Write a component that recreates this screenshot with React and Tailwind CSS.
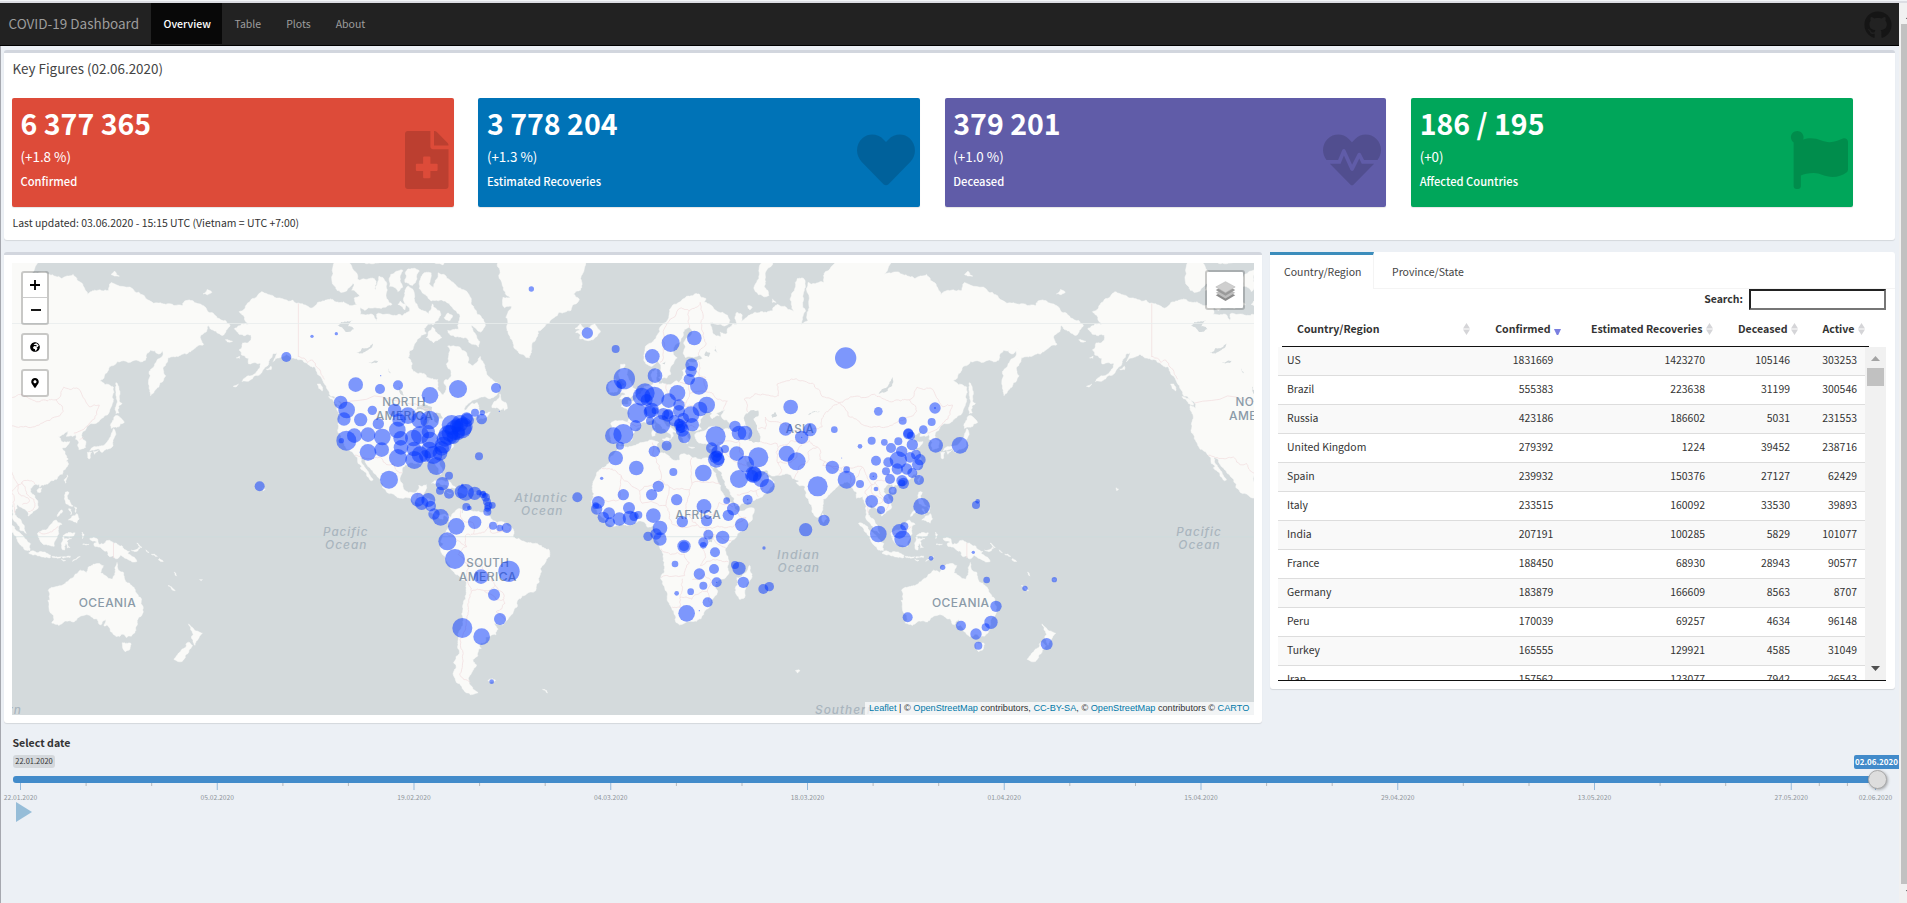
import { FaFileMedical, FaHeart, FaHeartbeat, FaFlag, FaGithub, FaGlobeAfrica, FaMapMarkerAlt } from "react-icons/fa";

/* ---------- Web Mercator helpers ---------- */

const WORLD = 853.33;
const MERIDIAN = 632.6;
const EQUATOR = 536.7;

function project(lon, lat) {
  const r = (lat * Math.PI) / 180;
  const y = Math.log(Math.tan(Math.PI / 4 + r / 2));
  return [MERIDIAN + (lon / 360) * WORLD, EQUATOR - (y * WORLD) / (2 * Math.PI)];
}

function noise(a, b) {
  const s = Math.sin(a * 12.9898 + b * 78.233) * 43758.5453;
  return s - Math.floor(s) - 0.5;
}

function roughen(p, q, depth, out) {
  const dx = q[0] - p[0];
  const dy = q[1] - p[1];
  const len = Math.hypot(dx, dy);
  if (depth === 0 || len < 1.6) {
    out.push(q);
    return;
  }
  const k = noise(p[0] + q[0], p[1] + q[1]) * (len > 14 ? 0.22 : 0.36);
  const mid = [(p[0] + q[0]) / 2 - dy * k, (p[1] + q[1]) / 2 + dx * k];
  roughen(p, mid, depth - 1, out);
  roughen(mid, q, depth - 1, out);
}

function toPath(text, closed) {
  const pts = text
    .trim()
    .split(/\s+/)
    .map((s) => s.split(",").map(Number))
    .map(([lon, lat]) => project(lon, lat));
  const ring = closed ? [...pts, pts[0]] : pts;
  const out = [ring[0]];
  for (let i = 1; i < ring.length; i++) roughen(ring[i - 1], ring[i], 3, out);
  return "M" + out.map((p) => p[0].toFixed(1) + " " + p[1].toFixed(1)).join("L") + (closed ? "Z" : "");
}

const LAND = [
  // North America
  "-168,65.6 -166,64.6 -161,64.5 -161,63.5 -164.5,63 -166,61.6 -165,60.6 -162,59.9 -162,58.7 -158.5,58.8 -157,58.8 -158,57.5 -161,56 -164.8,54.6 -163,54.7 -160,55.7 -156,57.3 -154,58.3 -153.5,59.2 -151.8,60.8 -150,61.2 -151.8,59.2 -149,60 -146,60.8 -144,60 -139.7,59.6 -137.5,58.9 -136,58.2 -134,58 -133,56.5 -131,55.3 -130,54 -128,52 -127.5,51 -124.5,49.7 -122.8,49 -122.4,47.5 -124.7,48.3 -124,46 -124.2,43 -124.3,40.3 -122.5,37.7 -121.8,36.6 -120.6,34.6 -118.4,33.8 -117.1,32.5 -116,30.5 -115.8,29.5 -114.2,28.2 -115,27.8 -113.5,26.7 -112.2,25.5 -112,24.6 -110.2,23 -109.5,23.2 -110.5,24.5 -111.3,26 -112.8,27.8 -114.5,30 -114.8,31.6 -113.2,31.3 -112,29 -110.5,27.5 -109.3,26 -108,25 -106.3,23.3 -105.3,21.5 -105.5,20.3 -104,19 -102,18 -99.7,16.7 -97,15.9 -94.6,16.2 -92.5,14.5 -90,13.8 -87.7,13 -86,11.3 -85.7,10 -83.8,9.3 -83,8.2 -81,7.5 -80,7.3 -79.5,8.9 -78,8 -77.4,7 -77.3,8.5 -79.5,9.5 -82,9 -83.6,10.8 -83.5,14.8 -86,15.9 -88.5,15.8 -88,18 -87,21.4 -90.3,21.1 -91,18.7 -94.5,18.2 -96.5,19.5 -97.8,22.5 -97.2,26 -97,28 -94.5,29.5 -91.5,29.4 -89.2,29.2 -89.5,30.3 -86,30.4 -84,30 -82.7,28.5 -81.8,26 -81,25.2 -80.1,26.5 -81.3,30 -81,32 -79,33.3 -77.5,34.4 -75.7,35.3 -76.3,37 -75,38.5 -74.2,40 -72,41.2 -70.2,41.7 -70.8,43 -68,44.4 -66,45 -64.5,45.5 -66,43.7 -64,44.6 -61,45.5 -60,46.5 -61.5,46 -64,46.3 -64.8,47.8 -65.5,49.1 -68,48.8 -71,47 -68,49.5 -65,50.3 -60,50.2 -57,51.5 -55.7,52.5 -56.5,54 -59,55 -61.7,57 -62.5,58.5 -64.3,60.3 -65.7,59 -67.5,58.3 -69.5,59 -70,61 -73,62.2 -78,62.4 -77.7,60 -78.5,58.5 -76.6,57 -76.5,56 -79.5,54.7 -79,52 -80,51.2 -82.3,52.9 -82.2,55.1 -85,55.3 -88,56.5 -92.5,57 -93,58.7 -94.8,60 -94,61.5 -92,62.8 -90.5,63.8 -87,64.8 -88,65.7 -86,66.4 -84,66.3 -82,67 -81.3,68.5 -84.5,69.6 -86,68 -88,68.5 -90.5,69 -92,70 -92.5,71.5 -95,72 -96.5,70.5 -95.5,69.5 -94,68.5 -97,67.8 -101,67.8 -108,68 -108,66.8 -110,68 -115,68 -115,69.3 -120,69.5 -124,69.8 -127.5,70.3 -130,70 -135,69 -140,69.6 -147,70.2 -152,70.8 -156.5,71.3 -161,70.2 -163,69.4 -166,68.4 -163.5,67 -161.8,66.3 -165,66.4",
  "-117,69.8 -113,68.6 -106,68.9 -101.5,69.5 -104,71 -105,73 -107,73.3 -108.5,71.5 -109,73 -112,72.9 -118,73 -118.5,71.5 -115,70.7 -117.5,70.4",
  "-125.5,72 -123,71.2 -119,72 -116,73.4 -120,75 -125,75",
  "-102.5,72 -100,71.8 -99,71.3 -97,71.9 -98,73 -97,74 -102,73.5",
  "-96,72.5 -93,72.1 -90,73.9 -93,74.2 -95.5,73.9",
  "-90,71.7 -89.5,73 -88,73.7 -85,73.7 -86,72.3 -84,71.8 -82,73.7 -77,72.8 -72,71.6 -68,70.3 -67,69 -63,67.2 -62,66.2 -64,65 -66,65.6 -68,66.2 -67,65 -64.5,63.3 -65,62.2 -68,62.8 -72,64 -77,64.5 -78,65.3 -73.5,65.5 -73,68 -76,69 -79,70 -85,70 -88,71",
  "-87,64 -84,63 -80.5,64 -82,64.6 -84.5,65.9",
  "-79.5,67.5 -77,67 -76,67.8 -78,68.2",
  "-99,69.5 -96,68.7 -95.5,69.5 -98,70",
  "-96,77 -96,75.3 -92,74.9 -80,74.6 -80,77",
  "-113,77 -113,74.8 -106,75 -105,77",
  "-59.3,47.7 -58,49.5 -56,51.5 -55.5,50 -53.5,49.2 -52.8,47.5 -54,46.9 -54.5,47.7 -55.8,47",
  "-128.3,50.7 -125,50 -123.4,48.4 -125.5,48.9",
  "-133,54 -131.7,54 -131,52.2",
  "-154.5,57.5 -152.5,58.2 -152.5,57.4",
  "-84.8,22 -82,23.1 -79,22.5 -75,20.7 -74.3,20.1 -77.5,19.9 -78.5,21.3 -82,22.3",
  "-74.3,18.4 -73,19.9 -70,19.7 -68.5,18.5 -71.5,17.8",
  "-78.3,18.4 -76.3,18.1 -77.5,17.8",
  "-67.2,18.4 -65.7,18.3 -67,18",
  "-156,20.2 -155,19.6 -155.7,19",
  "-168.5,53.4 -166.3,54 -167,53.4",
  "-171.8,63.6 -168.8,63.3 -171,63.2",
  "-167.2,60 -165.7,60.3 -165.8,59.9",
  // Greenland and Iceland
  "-60,78 -58.5,75.5 -56,74 -54.5,71.5 -51.5,70.5 -54.7,70.5 -54,69 -51,69.2 -53.5,67.5 -53,65.5 -51.5,63.8 -49.5,61.8 -48,61 -45,60.1 -43.5,60 -42.7,61.5 -41,63.5 -40,65.2 -37.5,65.8 -33,67.5 -31,68.3 -26,68.6 -22.5,70.2 -25,71 -22,71.5 -22,73 -20.5,74 -19,75.5 -18,78",
  "-24.3,65.6 -22,66.4 -20.3,65.6 -16,66.5 -13.6,65 -15,64.2 -18.8,63.4 -22.5,63.9 -22,64.5 -24,64.9 -21.8,65.4",
  // South America
  "-77.4,7 -77.3,4 -79,1.5 -80,.5 -80.9,-2.3 -79.8,-3 -81.2,-4.6 -81,-6 -79,-8.5 -77,-12 -76.2,-14 -73,-16.5 -70.4,-18.4 -70.2,-22 -70.5,-25.5 -71.5,-29 -71.5,-32.5 -73.3,-37 -73.5,-39.5 -73.8,-41.8 -73,-44 -74.5,-45 -75.5,-46.7 -74.5,-48.5 -75.5,-50.5 -73.5,-52.5 -71.5,-54 -68.5,-55.3 -65.2,-54.8 -68.3,-53 -69.2,-51 -67.7,-49.5 -65.8,-47.5 -67.5,-46 -65.5,-45 -65.2,-43 -63.8,-42.5 -65,-41 -62.2,-40.5 -62,-39 -57.7,-38.2 -56.8,-36.3 -58.3,-34.2 -57.5,-34.5 -54.9,-34.9 -53.4,-33.5 -50.5,-30.8 -48.7,-28.3 -48.6,-26 -46.5,-24.2 -44,-23 -41.9,-22.8 -40.8,-21.8 -39.5,-19 -39,-16 -38.9,-13.2 -37,-11.2 -35,-8.5 -34.9,-6.8 -35.5,-5.2 -38.5,-3.7 -41.5,-2.9 -44.5,-2.6 -48,-.7 -50.5,-.2 -50,1.5 -51.5,4.3 -54,5.8 -57.2,6 -60,8.4 -62,10.5 -66,10.5 -68.3,10.9 -70,12.1 -71.5,11 -71.7,9.2 -72,11.5 -74.5,11.1 -75.6,10 -76.8,8.3",
  "-61,-51.8 -59,-51.3 -57.8,-51.7 -60,-52.2",
  "-38,-54 -36.3,-54.3 -35.9,-54.9",
  // Africa
  "-5.9,35.8 -2,35.2 3,36.8 9.8,37.3 11,37 10.2,34.5 11.5,33.2 15.2,32.3 18,30.6 20,30.9 20,32.6 23,32.6 25.2,31.6 29,30.9 31,31.6 34.2,31.3 34.7,29.5 34.2,27.8 32.6,29.9 33.8,27 35.5,24 37.2,21 37.5,18.8 39.5,15.5 43,12.6 43.3,11.5 44.5,10.4 51.2,11.9 50.8,9.5 48,4.5 45,1.8 41.6,-1.7 39.2,-4.7 39.4,-7 40.6,-10.7 40.7,-15 37,-17.8 34.8,-20 35.5,-23.8 32.8,-25.8 32.6,-28.3 30,-31.2 27,-33.6 22,-34.2 19.8,-34.8 18.3,-34 18.2,-31.8 16.4,-28.6 15,-26.5 14.4,-22.5 11.8,-17.5 13.5,-12.5 13,-9 12.2,-5.8 9,-1 9.6,2.3 9.4,4 8.5,4.7 6,4.3 4.2,6.4 1,6 -2,4.8 -4,5.2 -7.7,4.4 -11.5,6.8 -13.3,8.7 -15,11 -16.8,12.4 -17.5,14.7 -16.3,18 -17,21 -15.8,24 -13,27.8 -10,29.5 -9.7,31.5 -6.8,34",
  "49.3,-12 50.4,-15.5 49.5,-18 47.2,-24.9 45,-25.5 43.3,-22.5 44.4,-20 44,-17 46.5,-15.7",
  // Eurasia
  "-9,37 -9.4,38.8 -8.8,41.5 -9.2,43.1 -8,43.7 -2,43.4 -1.4,44.5 -1.2,46 -2.5,47.4 -4.7,48 -4.5,48.6 -1.6,48.7 -1.8,49.7 0,49.4 1.6,50.8 3.5,51.5 4.5,52.5 5,53.4 7,53.6 8.7,53.9 8.2,55.5 8.2,57 10.6,57.7 10.3,56.2 10,54.8 11,54.1 14,54 18.5,54.8 19.8,54.4 21,55.5 21,57.2 22.5,57.7 24.3,57.1 24.3,58.3 23.4,59.2 28,59.6 30,59.9 28,60.6 25,60.2 22.5,60 21.3,61 21.5,63 25.2,65 24,65.8 22,65.5 21.3,64.3 17.8,62.5 17.2,61 18.8,60 16.8,58.5 16,56.3 14.2,55.4 12.8,55.5 11.3,58.8 10.5,59.3 8,58.1 5.5,58.8 5,61 6,62.6 9.5,63.7 11.5,65 13,66.5 15.5,68.2 19,69.7 23.5,70.7 28,71 31,70.3 30,69.8 33,69.4 38,68.3 41,67 40.5,66.4 36,66.3 33,66.7 34.8,64.5 37.5,63.9 37,65 39.8,64.7 40,65.6 42.2,66.4 44,66.3 44,68.3 46,68 46,66.8 50,68 54,68.4 59,68.5 61,69.5 65,69 68.5,68.3 67,69.7 67,71 69.5,73 72.7,72.8 72,71 73,68.5 71,66.3 74,67 74.5,69 74,72.5 77,72.3 80.5,72.5 80.8,73.6 87,75 95,77 113,77 106,73.5 112,73.8 114,73.5 119,73 124,73.5 128,72.3 130,70.9 133,71.5 139,71.5 140,72.5 150,71.3 153,70.9 160,69.7 163,69.5 170,69.3 171,70 176,69.7 180,69 184,67.8 188,67 190.2,66.1 187,64.4 184,65.2 181,66.2 180,65 178,64.5 179,62.7 175,61.8 172,60.8 168,60.3 164,60 162,58 163,56 162,54.8 160,53.2 158,51.8 156.7,51 156,53 156,57 158,58 161.5,60.3 163.8,62.5 160,60.8 156.5,61.6 154.5,59.5 150,59.5 142.5,59.2 138.5,57 135.3,54.8 137.5,53.8 141,53.2 140.5,50.5 140.4,48.5 137,45.2 134,43.2 131.5,43 130,42.2 127.7,40 127.5,39.2 129.4,37 129.2,35.2 126.4,34.5 126.4,37 125,38 125,39.6 122,39 121.2,38.9 122,40.6 119,39.2 117.7,38.8 119,37.3 122.5,37.2 119.3,35 121,32.5 121.9,31 121,30.5 122,29.5 121,28 119.5,25.5 117,23.5 114,22.3 110.5,21.2 109.9,20.4 109.7,21.5 108,21.6 106,20 106,18.5 109,15 109.3,12.5 107,10.5 105,8.7 104.9,10.2 102.5,12 101,12.8 100.4,13.5 99.3,10.5 100.3,8.2 102.2,6.2 103.4,4 104.2,1.4 101.5,2.8 100.3,5.5 98.3,8 98.6,11 97.7,15 97.2,16.8 94.5,16 94.3,18.5 92,21.5 90.5,22.6 88.5,21.7 87,21.3 85.5,19.8 82.3,16.8 80.2,15.5 80.2,13 79.8,10.3 78,8.1 76.3,9.8 74.5,14 73,17 72.7,20.8 70.5,20.9 69,22.3 70.3,22.9 67.5,23.8 66.5,25.3 61.5,25.1 57.3,25.6 56.7,27.1 54,26.6 51.5,27.8 50,30.1 48,30 48,29 50.2,26.7 50.2,25.6 51,24.6 51.5,25.9 51.5,24.3 54,24.2 56.2,26.2 56.6,24.5 59.8,22.5 58,20.3 57,18.8 55,17 52,15.6 48,14 45,12.8 43.5,12.7 42.8,16 40.8,19.5 39,21.5 38,24 35.5,27.8 35,29.5 34.2,31.3 35,33 36,35 36.1,36.8 33.5,36.1 30.6,36.6 28,36.7 26.5,38.3 26.2,39.5 29,40.5 31,41.1 35,42 38,41 41.5,41.4 41,43 38,44.5 37.3,45.3 39.3,47.2 35,46.2 36.5,45.3 33.5,44.5 32.7,45.5 33.5,46.1 31,46.7 29.7,45.2 28.6,43.8 27.7,42.4 29,41.2 26.2,40.7 24,40.8 23.7,39.9 22.7,40.5 23,39 24,37.8 23,36.5 21.7,36.9 21.2,38.3 19.4,40.5 19.5,41.8 16.5,43.4 15,44.6 13.6,45 13.6,45.7 12.3,45.3 12.4,44.2 14,42.5 16.1,41.8 18.4,40.2 16.9,40.4 17.1,39 16,37.9 15.7,39.9 12.5,41.5 10.3,43.3 9,44.4 7.5,43.8 3.5,43.3 3.2,41.9 .8,40.8 -.3,39.5 0,38.7 -2,36.8 -4.5,36.6 -5.6,36 -6.5,37",
  "-5.5,50.1 -3,50.7 1.3,51.2 1.6,52.7 0,53 -1.5,55 -2,57.5 -4,57.7 -3.2,58.6 -5,58.6 -6,56.5 -4.8,54.8 -3,54 -4.5,53.3 -5,51.8 -3,51.4",
  "-10,51.8 -6.3,52.2 -6,54 -7.3,55.3 -10,54.2",
  "11,55.6 12.6,56 12,54.8",
  "12.5,38 15.6,38.2 15,36.7",
  "8.3,39 8.4,40.8 9.7,41 9.5,39.2",
  "8.6,42.5 9.4,43 9.4,41.6",
  "23.6,35.4 26.2,35.2 25,34.9",
  "32.3,35 34.5,35.6 33.5,34.7",
  "51.5,71.5 53,70.9 55.5,70.6 57.5,70.8 55.5,72 56,73.3 60,75.5 66,78 58,78 55,75 53.5,73.5",
  "48.5,69.3 50.5,69.1 49.5,68.7",
  "59,70.3 60.5,69.8 59,69.8",
  "178.8,71 182.5,71.2 180.5,71.6",
  "139,75.6 143,75 150,75 147,75.5",
  "140,73.5 143.5,73.3 141.5,73.9",
  "142,54.3 143.3,52.5 143.3,49.5 144.6,49 142.8,47.2 143.3,46.2 142,46 142,48 142,51.5",
  "140,41.5 140.3,43.3 141.8,45.4 145.5,43.3 143.2,42",
  "141,41.4 142,39.6 141,38 140.8,35.7 138.8,34.7 136,33.5 135,34.6 131,34 132.5,35.4 136,35.8 138.5,37.3 140,39.5",
  "130,33.5 131.8,33.5 131,31.2 130.2,31.5",
  "132.5,33.8 134.6,34.2 133,32.8",
  "120.2,23.3 121.5,25.2 121.8,24.5 120.8,22",
  "108.7,19.3 110.6,20.1 110.3,18.5 109,18.4",
  "120.3,16 120.8,18.5 122.2,18.4 121.6,15.8 124,12.8 121,13.7",
  "122,7 123.5,8.6 125.5,9.7 126.5,7.5 125.5,5.7 124,6.5",
  "122,11.7 123,11.5 123,9.2",
  "124.5,12.5 125.6,12 125,10.2",
  "117.3,8.5 119.4,11.2 119.5,10.5",
  "109,1.5 109.6,2 111.5,2.8 113,3.2 116.8,7 119.2,5.2 117.8,4 117.8,1 116.5,-1.5 116,-4 114.5,-3.8 111.7,-3.4 110,-1.5",
  "95.3,5.6 97.5,5.2 100.5,2.3 103.8,-1 106,-3 105.8,-5.8 104.5,-5.8 102.3,-4 100.3,-1 98.7,1.7",
  "105.2,-6.8 106.5,-6 108.5,-6.7 111,-6.4 112.7,-7 114.5,-7.8 114.4,-8.7 110,-8.1 106.5,-7.4",
  "115,-8.3 117,-8.4 119,-8.4 118.5,-8.9 115.5,-8.8",
  "119,-3 119.8,.5 121,1.3 124.8,1.6 124.3,.4 120.3,.5 120.2,-1 123.3,-.8 121.3,-2 122.7,-4.5 121.5,-4.7 120.9,-2.8 120.4,-5.6 119.5,-5.5",
  "119.5,-8.4 122.8,-8.2 122.7,-8.8 119.5,-8.9",
  "123.6,-10.3 127,-8.4 125,-9.6",
  "119,-9.5 120.8,-10 120,-10.3",
  "127.7,2 128.6,1 127.9,-.8",
  "128,-3.2 130.7,-3.2 129.5,-3.5",
  "131,-.8 132.5,-.4 134,-.8 135,-3.3 138,-1.7 141,-2.6 144.5,-3.8 145.8,-5.5 147.8,-6.2 147,-6.9 150.8,-10.4 147.5,-9.8 144,-7.7 142.5,-9.3 139,-8.1 138,-6 135,-4.4 133,-4 132.8,-2.8 134,-2.4 131.4,-1.5",
  "148.5,-5.7 150.5,-5.5 151.8,-4.3 152.2,-4.9 150,-6.3",
  "150.8,-2.7 153,-4.5 152.5,-4.2",
  "154.7,-5.5 156,-6.7 155.3,-6.5",
  "157,-7.4 159.5,-8.3 158.8,-8.3",
  "160.5,-9.2 162,-10.4 160,-9.8",
  "164,-20.2 167,-22.2 166,-22",
  "166.6,-14.8 167.6,-16.4 167,-16",
  "177.3,-17.8 178.5,-17.8 178,-18.2",
  "79.8,8 80.2,9.7 81.8,7.5 80.5,6",
  // Australia and New Zealand
  "113.5,-22 114,-26 113.3,-26 115.7,-31.5 115,-34.2 118,-35 120,-33.9 124,-33.8 126,-32.3 131,-31.5 134,-32.8 135.7,-34.9 137.8,-32.8 137,-35.2 138.3,-34.8 139.7,-37 141,-38.1 143.5,-38.8 145,-38 146.4,-39.1 150,-37.5 151,-34 152.9,-31.5 153.5,-28.5 152.8,-25.3 150.8,-23.3 149,-20.5 146.2,-18.8 145.3,-15 143.5,-14.2 142.5,-10.8 141.6,-13 141.6,-16 140.5,-17.7 139,-17.4 135.5,-15 136.8,-12.2 132.5,-11.5 130.8,-12.5 129.5,-15 127,-14 125,-15.5 124,-17 122.2,-18 120,-19.8 116.8,-20.6",
  "144.7,-40.8 148.2,-40.9 147.8,-43 146,-43.6",
  "172.7,-34.5 175,-36.5 178.5,-37.7 177,-39.3 175.3,-41.6 173.9,-39.3 174.7,-38",
  "172.7,-40.6 174.3,-41.7 172.8,-43.7 170.7,-45.9 168.8,-46.6 166.5,-45.9 168.5,-44 171.3,-42.4",
  "68.7,-49.1 70.5,-49 69.5,-49.7",
];

const WATER = [
  "-92,46.8 -88,49 -84.6,47.9 -84.7,46.6 -88,46.9",
  "-87.8,42 -87,45.5 -85,45.8 -86.4,43",
  "-84.5,46 -81,46 -80,44.6 -81.7,44.5 -82.4,43.2 -83.7,44",
  "-124.5,66.2 -121,66.8 -118,67 -120,66 -117.5,65.5 -121,65 -122.5,65.8",
  "-116.5,61 -114,62 -109.5,62.9 -112,61.5 -114,60.9",
  "-111.5,59 -107,59.4 -110,58.8",
  "-103,57.8 -102,56.5 -102.8,56.8",
  "-98.7,53.5 -97,52 -96.5,50.5 -98,51.5",
  "47,45 49,46.5 53,46.9 53,45.2 51,44.5 52.5,42.5 53,40.5 53.9,39 54,37 51,36.8 49,37.6 49,39.5 49.5,40.5 48,42 47.5,43.5",
  "58.5,45.5 60,46.5 61,45.5 59,44.7",
  "103.8,51.5 106,51.8 108.5,53.2 109.8,55.7 107.3,53.2",
  "74,45.5 76,46.6 79,46.6 75.5,46.2",
  "30.3,60.6 31,61.4 32.8,61 32,60.2",
  "34.5,61.5 35.2,62.4 36,61",
  "12.5,58.8 13.8,59.3 13.6,58.6",
  "31.8,0 34,.3 33.5,-2.3 32,-2",
];

const BORDERS = [
  "-123,49 -95,49 -89,48 -84.5,46.5 -82.5,45",
  "-141,60.3 -137,59 -135,59.5 -131.5,56.5 -130,55.2",
  "-117.1,32.5 -111,31.3 -106.5,31.8 -103,29 -101,29.5 -99,26.5 -97.2,26",
  "-92.2,14.5 -91,17.8 -89,17.8 -88.5,16",
  "-79,1.5 -75.5,0 -70,-4.2 -70,1 -67,1.2 -67.5,6 -72,7.5 -72.5,11",
  "-70,-4.2 -73.5,-7.5 -70.5,-11 -68.8,-12.5 -69.5,-17.5 -68,-22.5 -66.5,-22 -62.5,-22.2 -58,-20 -60,-16 -65,-11.5 -70.5,-11",
  "-68,-22.5 -69.5,-28 -70,-33 -71.5,-38 -71.8,-45 -73,-50 -68.5,-52.3",
  "-62.5,-22.2 -57.7,-25.5 -54.5,-25.6 -54.2,-24 -58,-20",
  "-54.5,-25.6 -53.8,-27 -57.6,-30.2 -53.5,-33.5",
  "-67,1.2 -64,1.5 -60,5 -60,2 -52,2.5 -51.5,4.2",
  "-57.2,6 -57,2 -54.5,2.4 -54,5.7",
  "-8.7,27.7 -8.7,27.3 -13,27.7",
  "-8.7,27.3 -4.8,25 3,19 12,23.5 10,30 8.5,33 8.3,36.9",
  "-4.8,25 -5.5,15.5 -12,15 -16.3,16.5",
  "3,19 4,14 14,13 15.5,20.5 24,19.5 25,22 25,31.6",
  "12,23.5 15.5,20.5",
  "25,22 36.8,22",
  "24,19.5 22.5,13 24,8.7 27.4,5 31,3.7 36,4.5 42,4 47.9,8 43,11",
  "24,8.7 34,9 36.5,14.3 42.4,12.5",
  "14,13 15.5,7.5 18.5,4.5 27.4,5",
  "12,-5 16,-7.5 21.8,-7.3 24,-11 22,-16.2 12,-17",
  "31,3.7 29.5,-4 30.8,-8.3 28.5,-12 34,-9.5 40.5,-10.6",
  "41.6,-1.7 34,1 34,-1 39.2,-4.6",
  "21,-17.5 21,-22 20,-24.8 20,-28.5 16.5,-28.6",
  "20,-24.8 25,-25.5 29.5,-22.2 31.5,-22.4 32,-26 32.8,-26.8",
  "25.2,-17.8 30.3,-15.6 33,-18 31.5,-22.4",
  "-1.8,43.4 3,42.4",
  "2.5,51 6,49.5 8.2,49 7.5,47.5 10,47 13.7,46.5",
  "14.2,54 15,51 19,49.5 22.5,49 24,51.5 23.5,54 20,54.4",
  "22.5,49 22,48 26,48 28.2,45.5",
  "24,51.5 31,52 34,51.5 36,50 40,49.6 38.2,47.2",
  "11.5,59 12.5,63.5 14.5,66.5 20.5,69 24,68.6 24,65.8",
  "24,68.6 28.5,69.8 29,67 30,64 31,62.8 27.8,60.6",
  "28.2,56 27.5,59.4",
  "31,52 30.8,55.6 28.2,56 24,57.8",
  "26.5,41.8 22.5,42.3 22.5,44.5 28,44",
  "36,36.8 42.3,37.2 44.8,37.2 44.5,39.7 42,41.5",
  "44.8,37.2 46,33 48,30",
  "38.8,33.4 36,32.5 35,29.5",
  "38.8,33.4 42,31 46.5,29 48,28.6",
  "44,17.4 52,19 55,20 55,22.6 51.6,24.1",
  "52,19 53,16.5",
  "48.5,46.5 47,50 51.5,51.5 58,51 61.5,51 61,54 69,55.3 76,54.2 80,50.8 87.3,49.1",
  "53,41.5 56,41.3 56,45 61.5,43.5 66,42 68,40.8 73.5,40 80,42 80.5,45 83,47.2 87.3,49.1",
  "54,37.3 61,36.5 61.5,35.3 66.5,37.4 71.5,36.6 74.8,37.3 73.5,39.5",
  "61.5,35.3 61,31.4 63,27.2 61.6,25.2",
  "61,29.8 66.3,29.9 69.3,31.8 71.5,36",
  "68.2,23.7 70,28 74.5,31 74,33.5 78,35.4 74.8,37",
  "78,35.4 79,31 81.2,30.2 88,27.8 92,27.8 97,28.2 98.7,25 101,21.5 105.5,23 108,21.6",
  "81.2,30.2 80.2,28.8 88,26.5 88,27.8",
  "88,26.5 92,25 92.3,21.2",
  "97,28.2 94,24 92.3,21.2",
  "101,21.5 98,18 99,13 99.5,10",
  "102,22.3 104,19 107.5,15.5 107.5,12 105,10.5",
  "101,21.5 101,17.8 105.6,15 102.5,13.5",
  "87.3,49.1 92,50.7 98,50.5 102,51.4 107,49.8 113,49.6 116.7,49.9 119.8,46.7 112,43.6 105,41.8 97,42.7 91,45.2 87.3,49.1",
  "116.7,49.9 120,53.2 125.5,53 130.8,48 135,48.4 131.5,43.5 130.5,42.6 124.3,40",
  "126.7,37.8 128.3,38.6",
  "109.6,1.9 112,1.2 115,2 117.6,4.2",
];

const LAND_PATH = LAND.map((s) => toPath(s, true)).join("");
const WATER_PATH = WATER.map((s) => toPath(s, true)).join("");
const BORDER_PATH = BORDERS.map((s) => toPath(s, false)).join("");

/* ---------- Case bubbles: x, y, radius on a regional grid (1/3 px) ---------- */

const REGIONS = [
  {
    id: "pacific",
    origin: "translate(0 250) scale(0.33333)",
    points: "936,259,5 1009,251,5 859,321,15 1142,377,2 779,709,15",
  },
  {
    id: "americas",
    origin: "translate(300 350) scale(0.33333)",
    points:
      "694,-183,8 167,104,22 240,117,15 294,106,15 390,136,25 474,117,27 588,114,15 598,184,2 122,157,20 140,180,25 132,207,20 182,209,20 217,181,14 235,221,17 284,181,20 324,197,25 292,240,25 297,210,20 358,210,24 389,210,28 163,257,22 139,272,30 124,272,8 204,254,22 247,261,25 302,265,22 340,264,25 204,307,25 245,299,22 303,292,22 294,324,27 343,330,27 342,297,22 360,314,25 375,318,18 400,315,27 409,348,27 360,255,27 385,245,20 390,270,25 388,300,25 425,295,22 420,310,22 430,285,25 435,265,25 445,255,30 455,225,30 465,240,30 480,220,25 485,235,30 490,230,28 500,205,18 502,210,20 450,250,25 460,262,20 475,250,20 470,225,20 525,188,12 547,188,8 545,207,16 537,319,12 267,389,27 447,377,12 427,401,20 420,422,12 447,431,15 353,449,21 365,460,20 385,450,21 392,468,16 402,492,17 422,502,25 484,425,20 497,427,25 487,405,4 524,430,20 537,428,8 548,434,10 550,430,8 557,442,13 561,455,12 565,467,12 577,466,10 562,485,12 555,437,8 563,475,10 499,471,12 508,474,7 469,529,25 524,517,20 579,527,12 599,534,10 620,534,15 442,574,27 465,627,30 543,680,22 627,664,32 582,734,18 600,807,18 487,834,30 545,860,25 575,995,7",
  },
  {
    id: "europe-africa",
    origin: "translate(560 250) scale(0.33333)",
    points:
      "82,249,17 167,297,12 332,279,27 403,264,22 277,319,22 285,377,22 395,344,19 393,364,17 388,388,17 417,407,27 193,386,32 162,414,24 184,402,15 200,456,15 255,429,29 245,440,27 283,440,30 260,450,18 352,429,24 326,452,22 357,465,17 357,483,18 232,489,30 270,486,19 285,482,10 275,480,22 270,513,12 227,527,17 303,523,28 310,492,18 323,497,18 325,492,15 343,512,17 393,494,25 420,477,22 440,465,25 370,505,17 397,524,20 360,525,18 365,530,18 367,540,20 357,520,14 373,560,19 362,535,14 160,557,25 190,552,30 180,587,12 320,587,15 283,604,17 167,624,22 229,654,22 125,685,5 340,666,12 430,669,25 467,559,30 525,529,17 537,549,22 555,549,22 455,594,17 472,605,18 470,618,17 469,628,25 475,628,18 465,622,17 495,597,12 530,611,22 595,622,30 557,642,25 537,687,27 580,674,25 583,672,22 577,678,18 603,687,24 622,709,22 563,749,15 563,749,2 500,752,10 520,777,19 505,796,17 545,824,20 692,471,22 677,537,20 750,539,20 725,562,20 725,562,2 680,611,24 710,634,27 773,709,30 817,652,20 860,689,27 860,659,10 845,624,1.5 900,589,7 823,539,10 955,484,13 857,324,32 737,839,20 792,811,17 52,742,15 115,757,19 110,777,17 107,767,10 130,802,17 147,790,18 150,817,15 178,807,20 207,774,18 210,804,22 222,799,14 235,795,12 190,734,17 275,734,17 295,709,17 280,797,22 350,749,17 432,769,22 367,815,17 440,812,17 300,834,22 300,867,20 288,852,17 264,859,14 445,854,15 488,862,20 372,889,20 372,889,15 430,877,15 430,886,10 465,907,15 462,957,15 345,942,10 418,972,17 430,1007,12 470,997,15 470,997,2 392,1025,10 350,1030,7 443,1057,15 380,1090,25 418,1082,2 525,945,12 537,955,20 550,997,17 610,1017,15 628,1010,14 612,894,5",
  },
  {
    id: "asia-oceania",
    origin: "translate(840 300) scale(0.33333)",
    points:
      "95,422,12 133,427,10 108,482,15 100,529,12 100,529,2 60,552,12 108,567,7 95,604,19 123,630,12 115,702,25 188,362,12 285,324,17 285,324,3 275,366,12 250,389,13 205,400,15 205,402,16 213,407,12 175,424,12 153,444,15 217,434,17 185,454,17 175,480,26 145,487,15 210,472,16 228,464,15 240,479,17 233,494,17 172,507,17 200,507,17 138,514,12 217,519,15 150,537,15 186,542,17 190,550,17 186,549,10 237,540,15 158,572,12 145,597,15 287,436,22 360,436,25 245,619,25 408,615,12 413,604,7 193,679,12 178,694,22 188,717,25 400,757,5 273,775,7 308,802,8 440,840,10 555,865,8 643,839,8 468,919,17 453,967,20 437,982,12 408,1002,17 415,1037,12 363,977,15 203,952,15 620,1032,18",
  },
];

const LAND_LABELS = [
  ["NORTH", 382.3, 406, 43.5],
  ["AMERICA", 375.7, 420, 57.5],
  ["SOUTH", 466.3, 567, 43],
  ["AMERICA", 458.7, 581, 58],
  ["AFRICA", 675.3, 519, 45.7],
  ["ASIA", 785.7, 433, 28.5],
  ["OCEANIA", 78.7, 606.7, 57.5],
  ["OCEANIA", 932, 606.7, 57.5],
  ["NORTH", 1235.6, 406, 43.5],
  ["AMERICA", 1229, 420, 57.5],
];

const SEA_LABELS = [
  ["Pacific", 323, 536.3, 45.5],
  ["Ocean", 325, 549, 42.5],
  ["Pacific", 1176.3, 536.3, 45.5],
  ["Ocean", 1178.3, 549, 42.5],
  ["Atlantic", 514.3, 502, 54],
  ["Ocean", 521, 515, 42.5],
  ["Indian", 777, 559, 43],
  ["Ocean", 777.5, 571.7, 42.5],
  ["Southern", 815, 713.6, 60],
  ["Southern", -38, 713.6, 60],
];

function WorldMap() {
  return (
    <svg className="block h-[452px] w-[1242px] bg-[#d4dadc]" viewBox="12 263 1242 452">
      <defs>
        <g id="world">
          <path d={LAND_PATH} fill="#fafaf8" stroke="#fafaf8" strokeWidth="0.5" />
          <path d={WATER_PATH} fill="#d4dadc" />
          <path d={BORDER_PATH} fill="none" stroke="#f2dfe1" strokeWidth="0.8" />
          <path d="M298.4 303.5V357M966.8 543V558" stroke="#f2dfe1" strokeWidth="0.8" />
        </g>
      </defs>
      <use href="#world" x={-WORLD} />
      <use href="#world" />
      <use href="#world" x={WORLD} />
      <path d="M12 323.5H1254" stroke="#e8ecec" strokeWidth="0.8" />
      <path d="M12 536.7H1254" stroke="#cddddf" strokeWidth="0.8" strokeOpacity="0.7" />
      <g fill="#8b9aa8" fontFamily="Inter, 'Liberation Sans', sans-serif" fontSize="11.3" fontWeight="500" letterSpacing="0.4">
        {LAND_LABELS.map(([t, x, y, w], i) => (
          <text key={i} x={x} y={y} textLength={w} lengthAdjust="spacingAndGlyphs">
            {t}
          </text>
        ))}
      </g>
      <g fill="#a9b5be" fontFamily="Inter, 'Liberation Sans', sans-serif" fontSize="11.4" fontWeight="500" fontStyle="italic" letterSpacing="1">
        {SEA_LABELS.map(([t, x, y, w], i) => (
          <text key={i} x={x} y={y} textLength={w} lengthAdjust="spacingAndGlyphs">
            {t}
          </text>
        ))}
      </g>
      {REGIONS.map((r) => (
        <g key={r.id} transform={r.origin} fill="#0033ff" fillOpacity="0.5">
          {r.points.split(" ").map((p, i) => {
            const [cx, cy, rad] = p.split(",");
            return <circle key={i} cx={cx} cy={cy} r={rad} />;
          })}
        </g>
      ))}
    </svg>
  );
}

const ctl =
  "flex items-center justify-center rounded-[3px] border-2 border-black/20 bg-white bg-clip-padding text-black";

function MapPanel() {
  return (
    <section className="h-[471px] w-[1258px] rounded-[3px] border-t-[3px] border-[#d2d6de] bg-white px-2 pt-2 shadow-[0_1px_1px_rgba(0,0,0,0.1)]">
      <div className="relative h-[452px] w-[1242px] overflow-hidden">
        <WorldMap />
        <div className="absolute top-2 left-[9px] flex flex-col gap-[8px]">
          <div className="flex h-[54px] w-7 flex-col rounded-[3px] border-2 border-black/20 bg-white bg-clip-padding text-black">
            <div className="flex h-[25px] items-center justify-center border-b border-[#ccc]">
              <svg viewBox="0 0 10 10" className="size-[10px]">
                <path d="M5 0V10M0 5H10" stroke="currentColor" strokeWidth="1.8" />
              </svg>
            </div>
            <div className="flex flex-1 items-center justify-center pb-[2px] pl-px">
              <svg viewBox="0 0 10 10" className="size-[10px]">
                <path d="M0 5H10" stroke="currentColor" strokeWidth="1.8" />
              </svg>
            </div>
          </div>
          <div className={ctl + " size-7"}>
            <FaGlobeAfrica className="size-[10px]" />
          </div>
          <div className={ctl + " size-7"}>
            <FaMapMarkerAlt className="size-[10px]" />
          </div>
        </div>
        <div className={ctl + " absolute top-[7px] right-[9px] size-10"}>
          <svg viewBox="0 0 26 26" className="size-[23px]">
            <path d="M13 12.5L24 18.5L13 25L2 18.5Z" fill="#8c8c8c" />
            <path d="M13 9.5L24 15.5L13 22L2 15.5Z" fill="#bdbdbd" />
            <path d="M13 6.5L24 12.5L13 19L2 12.5Z" fill="#9a9a9a" />
            <path d="M13 3L24 9L13 15.5L2 9Z" fill="#cfcfcf" stroke="#b4b4b4" strokeWidth="0.6" />
          </svg>
        </div>
        <div className="absolute right-0 bottom-0 h-[13px] w-[389px] bg-white/70 pl-1 font-['Liberation_Sans',Arial,sans-serif] text-[9.17px] leading-[12px] whitespace-nowrap text-[#333] [&_a]:text-[#0078a8]">
          <a>Leaflet</a> | © <a>OpenStreetMap</a> contributors, <a>CC-BY-SA</a>, © <a>OpenStreetMap</a> contributors ©{" "}
          <a>CARTO</a>
        </div>
      </div>
    </section>
  );
}

/* ---------- Key figures ---------- */

const CARDS = [
  { value: "6 377 365", delta: "(+1.8 %)", label: "Confirmed", color: "bg-[#dd4b39]", Icon: FaFileMedical, iconSize: "w-[43.5px]" },
  { value: "3 778 204", delta: "(+1.3 %)", label: "Estimated Recoveries", color: "bg-[#0073b7]", Icon: FaHeart, iconSize: "w-[58px]" },
  { value: "379 201", delta: "(+1.0 %)", label: "Deceased", color: "bg-[#605ca8]", Icon: FaHeartbeat, iconSize: "w-[58px]" },
  { value: "186 / 195", delta: "(+0)", label: "Affected Countries", color: "bg-[#00a65a]", Icon: FaFlag, iconSize: "w-[58px]" },
];

function KeyFigures() {
  return (
    <section className="mr-1 ml-1 h-[190px] rounded-[3px] border-t-[3px] border-[#d2d6de] bg-white px-2 shadow-[0_1px_1px_rgba(0,0,0,0.1)]">
      <h3 className="pt-[5px] pl-[0.5px] text-[13.4px] leading-[20px] text-[#444]">Key Figures (02.06.2020)</h3>
      <div className="mt-[20px] flex gap-[24.7px]">
        {CARDS.map(({ value, delta, label, color, Icon, iconSize }) => (
          <div
            key={label}
            className={"flex h-[109px] w-[441.7px] shrink-0 justify-between rounded-[2px] pr-[5px] pl-[8.5px] text-white shadow-[0_1px_1px_rgba(0,0,0,0.1)] " + color}
          >
            <div className="pt-[9px]">
              <div className="text-[28.5px] leading-[32px] font-bold">{value}</div>
              <div className="mt-[5px] text-[13.4px] leading-[24px]">{delta}</div>
              <div className="mt-[3px] text-[11.2px] leading-[20px] font-medium">{label}</div>
            </div>
            <Icon className={"mt-[33px] h-[58px] text-black/15 " + iconSize} />
          </div>
        ))}
      </div>
      <p className="mt-[6px] pl-[0.5px] text-[10.45px] leading-[20px] text-[#333]">
        Last updated: 03.06.2020 - 15:15 UTC (Vietnam = UTC +7:00)
      </p>
    </section>
  );
}

/* ---------- Table ---------- */

const ROWS = [
  ["US", 1831669, 1423270, 105146, 303253],
  ["Brazil", 555383, 223638, 31199, 300546],
  ["Russia", 423186, 186602, 5031, 231553],
  ["United Kingdom", 279392, 1224, 39452, 238716],
  ["Spain", 239932, 150376, 27127, 62429],
  ["Italy", 233515, 160092, 33530, 39893],
  ["India", 207191, 100285, 5829, 101077],
  ["France", 188450, 68930, 28943, 90577],
  ["Germany", 183879, 166609, 8563, 8707],
  ["Peru", 170039, 69257, 4634, 96148],
  ["Turkey", 165555, 129921, 4585, 31049],
  ["Iran", 157562, 123077, 7942, 26543],
];

function Sort({ active }) {
  return active ? (
    <svg viewBox="0 0 7 12" className="h-3 w-[7px] shrink-0">
      <path d="M0 6H7L4.2 12H2.8Z" fill="#7a7fe0" />
    </svg>
  ) : (
    <svg viewBox="0 0 7 12" className="h-3 w-[7px] shrink-0">
      <path d="M0 5.5L3.5 0L7 5.5ZM0 6.5L3.5 12L7 6.5Z" fill="#d5d5d8" />
    </svg>
  );
}

function TablePanel() {
  return (
    <section className="h-[437px] w-[625px] rounded-[3px] bg-white shadow-[0_1px_1px_rgba(0,0,0,0.1)]">
      <div className="flex h-[37px] text-[10.5px] leading-[20px] text-[#444]">
        <div className="w-[104px] border-t-[3px] border-r border-t-[#3c8dbc] border-r-[#f4f4f4] pt-[7px] pl-[14px]">
          Country/Region
        </div>
        <div className="flex-1 border-b border-[#f4f4f4] pt-[10px] pl-[18px]">Province/State</div>
      </div>
      <div className="flex h-[21px] justify-end gap-[6px] pr-[9px] text-[10.5px] font-bold text-[#333]">
        <span className="leading-[19px]">Search:</span>
        <div className="h-[21px] w-[137px] border-2 border-t-[#222] border-r-[#767676] border-b-[#767676] border-l-[#222] bg-white" />
      </div>
      <div className="ml-[8px] flex h-[36px] pt-[9px] text-[10.6px] leading-[20px] font-bold whitespace-nowrap text-[#333]">
        <div className="flex h-5 w-[192px] items-center justify-between pl-[19px]">
          Country/Region <Sort />
        </div>
        <div className="flex h-5 w-[90.5px] items-center justify-end gap-[3px]">
          Confirmed <Sort active />
        </div>
        <div className="flex h-5 w-[152.5px] items-center justify-end gap-[3.5px]">
          Estimated Recoveries <Sort />
        </div>
        <div className="flex h-5 w-[84.5px] items-center justify-end gap-[3px]">
          Deceased <Sort />
        </div>
        <div className="flex h-5 w-[67px] items-center justify-end gap-[3px]">
          Active <Sort />
        </div>
      </div>
      <div className="ml-[12px] h-px w-[587px] bg-[#111]" />
      <div className="ml-[8px] flex h-[334px] w-[608px] border-b border-[#111]">
        <div className="h-full w-[587px] overflow-hidden text-[10.45px] leading-[26px] text-[#333]">
          {ROWS.map((r, i) => (
            <div
              key={r[0]}
              className={
                "grid h-[29px] grid-cols-[150px_125.4px_151.6px_85px_67px] border-b border-[#ddd] " +
                (i % 2 === 0 ? "bg-[#f9f9f9]" : "bg-white")
              }
            >
              <div className="pl-[9px]">{r[0]}</div>
              {r.slice(1).map((n, j) => (
                <div key={j} className="text-right">
                  {n}
                </div>
              ))}
            </div>
          ))}
        </div>
        <div className="flex w-[21px] flex-col items-center bg-[#f1f1f1] pt-[9px] pb-[9px]">
          <svg viewBox="0 0 9 5" className="h-[5px] w-[9px]">
            <path d="M0 5L4.5 0L9 5Z" fill="#a3a3a3" />
          </svg>
          <div className="mt-[7px] h-[18px] w-[17px] bg-[#c1c1c1]" />
          <svg viewBox="0 0 9 5" className="mt-auto h-[5px] w-[9px]">
            <path d="M0 0L4.5 5L9 0Z" fill="#505050" />
          </svg>
        </div>
      </div>
    </section>
  );
}

/* ---------- Date slider ---------- */

const DATES = ["22.01.2020", "05.02.2020", "19.02.2020", "04.03.2020", "18.03.2020", "01.04.2020", "15.04.2020", "29.04.2020", "13.05.2020", "27.05.2020"];
const MAJOR = [...DATES.map((d, i) => ({ d, x: 20.5 + i * 196.75 })), { d: "02.06.2020", x: 1875.5 }];
const MINOR = [...Array(9).keys()].flatMap((i) => [20.5 + i * 196.75 + 65.6, 20.5 + i * 196.75 + 131.2]).concat([1819.3, 1847.4]);

function DateSlider() {
  return (
    <section className="pt-[10px]">
      <div className="pl-[12.5px] text-[10.6px] leading-[19px] font-bold text-[#333]">Select date</div>
      <div className="mt-[3px] flex h-[14px] items-start justify-between pl-[13px]">
        <span className="h-[13px] w-[42px] rounded-[3px] bg-[#d4d8dc] text-center text-[7.5px] leading-[11px] text-[#333]">
          22.01.2020
        </span>
        <span className="h-[14px] w-[45px] rounded-l-[2px] bg-[#428bca] text-center text-[8px] leading-[13px] font-bold text-white">
          02.06.2020
        </span>
      </div>
      <div className="relative">
        <div className="mt-[7px] ml-[13px] h-[7px] w-[1870px] rounded-l-[3px] bg-[#428bca]" />
        <div className="absolute -top-[6px] left-[1868px] size-[19px] rounded-full border border-[#aaa] bg-[#ddd] shadow-[1px_1px_3px_rgba(0,0,0,0.3)]" />
      </div>
      <svg className="block h-[19px] w-[1899px]" viewBox="0 0 1899 19">
        {MINOR.map((x) => (
          <path key={x} d={`M${x.toFixed(1)} 0V3`} stroke="#b4b9be" strokeWidth="1" />
        ))}
        {MAJOR.map(({ d, x }) => (
          <g key={d}>
            <path d={`M${x} 0V7`} stroke="#93b9dc" strokeWidth="1" />
            <text x={x} y="16.7" textAnchor="middle" fontSize="6.7" fill="#8f959b">
              {d}
            </text>
          </g>
        ))}
      </svg>
      <svg viewBox="0 0 16 20" className="ml-4 h-5 w-4">
        <path d="M0 0L16 10L0 20Z" fill="#96bdd8" />
      </svg>
    </section>
  );
}

function Navbar() {
  return (
    <header className="flex h-[43px] w-[1899px] border-b border-black bg-[#222] text-[10.5px] leading-[41px] text-[#9d9d9d]">
      <div className="w-[151px] pl-[8.5px] text-[13.5px]">COVID-19 Dashboard</div>
      <div className="h-[41px] w-[71px] bg-[#080808] pl-[12.5px] font-medium text-white">Overview</div>
      <div className="pl-[12.5px]">Table</div>
      <div className="pl-[25px]">Plots</div>
      <div className="pl-[25px]">About</div>
      <FaGithub className="mt-[8px] mr-[7px] ml-auto size-[28px] text-[#151515]" />
    </header>
  );
}

export default function App() {
  return (
    <div className="flex h-[903px] w-[1907px] flex-col overflow-hidden bg-[#ecf0f5] font-['Noto_Sans_CJK_SC',sans-serif]">
      <div className="h-[3px] shrink-0 border-t border-[#f2f4f7] bg-[#dcdde3]" />
      <div className="flex h-[900px]">
        <main className="w-[1899px]">
          <Navbar />
          <div className="h-[857px] border-l border-[#a6a8af]">
            <div className="-ml-px pt-[4px]">
              <KeyFigures />
              <div className="mt-[12px] ml-1 flex gap-2">
                <MapPanel />
                <TablePanel />
              </div>
              <DateSlider />
            </div>
          </div>
        </main>
        <div className="relative w-2 overflow-hidden bg-[#f1f1f1] pt-[21px] pl-[2px]">
          <svg viewBox="0 0 8 5" className="absolute top-[12px] left-[6px] h-[4px] w-2">
            <path d="M0 5L4 0L8 5Z" fill="#505050" />
          </svg>
          <div className="h-[860px] bg-[#c1c1c1]" />
          <svg viewBox="0 0 8 5" className="absolute bottom-[9px] left-[6px] h-[4px] w-2">
            <path d="M0 0L4 5L8 0Z" fill="#505050" />
          </svg>
        </div>
      </div>
    </div>
  );
}
